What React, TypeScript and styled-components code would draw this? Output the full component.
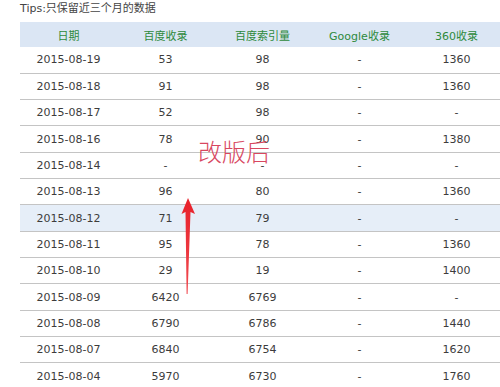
import React from 'react';
import styled, { createGlobalStyle } from 'styled-components';

const GlobalStyle = createGlobalStyle`
  html, body {
    margin: 0;
    padding: 0;
    background: #fff;
    overflow: hidden;
  }
`;

const Page = styled.div`
  width: 500px;
  height: 387px;
  overflow: hidden;
  padding-left: 20px;
  box-sizing: border-box;
  font-family: "DejaVu Sans", "Noto Sans CJK SC", sans-serif;
`;

const Tips = styled.div`
  height: 22px;
  padding-top: 2px;
  box-sizing: border-box;
  font-size: 11px;
  line-height: 14px;
  color: #444;
`;

const TableWrap = styled.div`
  position: relative;
  width: 485px;
`;

const Table = styled.table`
  width: 485px;
  border-collapse: collapse;
  table-layout: fixed;
`;

const HeadCell = styled.th`
  width: 97px;
  height: 25px;
  padding: 0;
  background: #dbe6f4;
  color: #2e8a3c;
  font-weight: normal;
  font-size: 11px;
  text-align: center;
  font-family: "DejaVu Sans", "Noto Sans CJK SC", sans-serif;
`;

const Row = styled.tr<{ $hi?: boolean }>`
  height: 26.33px;
  background: ${({ $hi }) => ($hi ? '#e6eef8' : '#fff')};
  border-bottom: 1px solid #c4c4c4;
`;

const Cell = styled.td`
  padding: 0;
  text-align: center;
  font-size: 11px;
  color: #3c3c3c;
`;

const Note = styled.div`
  position: absolute;
  left: 178px;
  top: 117px;
  font-family: "Noto Sans CJK SC", sans-serif;
  font-weight: 300;
  font-size: 24px;
  line-height: 24px;
  color: #d8475f;
`;

const Arrow = styled.svg`
  position: absolute;
  left: 160px;
  top: 175px;
`;

const rows: [string, string, string, string, string][] = [
  ['2015-08-19', '53', '98', '-', '1360'],
  ['2015-08-18', '91', '98', '-', '1360'],
  ['2015-08-17', '52', '98', '-', '-'],
  ['2015-08-16', '78', '90', '-', '1380'],
  ['2015-08-14', '-', '-', '-', '-'],
  ['2015-08-13', '96', '80', '-', '1360'],
  ['2015-08-12', '71', '79', '-', '-'],
  ['2015-08-11', '95', '78', '-', '1360'],
  ['2015-08-10', '29', '19', '-', '1400'],
  ['2015-08-09', '6420', '6769', '-', '-'],
  ['2015-08-08', '6790', '6786', '-', '1440'],
  ['2015-08-07', '6840', '6754', '-', '1620'],
  ['2015-08-04', '5970', '6730', '-', '1760'],
];

const heads = ['日期', '百度收录', '百度索引量', 'Google收录', '360收录'];

export default function App() {
  return (
    <Page>
      <GlobalStyle />
      <Tips>Tips:只保留近三个月的数据</Tips>
      <TableWrap>
        <Table>
          <thead>
            <tr>
              {heads.map((h) => (
                <HeadCell key={h}>{h}</HeadCell>
              ))}
            </tr>
          </thead>
          <tbody>
            {rows.map((r) => (
              <Row key={r[0]} $hi={r[0] === '2015-08-12'}>
                {r.map((v, i) => (
                  <Cell key={i}>{v}</Cell>
                ))}
              </Row>
            ))}
          </tbody>
        </Table>
        <Note>改版后</Note>
        <Arrow width="20" height="100" viewBox="0 0 20 100">
          <defs>
            <linearGradient id="ar" x1="0" y1="0" x2="0" y2="1">
              <stop offset="0" stopColor="#e8202a" />
              <stop offset="1" stopColor="#f04a50" />
            </linearGradient>
          </defs>
          <path d="M8 1 L15 17 L10.5 15 L7.6 97 L6.6 97 L5.5 15 L1.5 17 Z" fill="url(#ar)" />
        </Arrow>
      </TableWrap>
    </Page>
  );
}
